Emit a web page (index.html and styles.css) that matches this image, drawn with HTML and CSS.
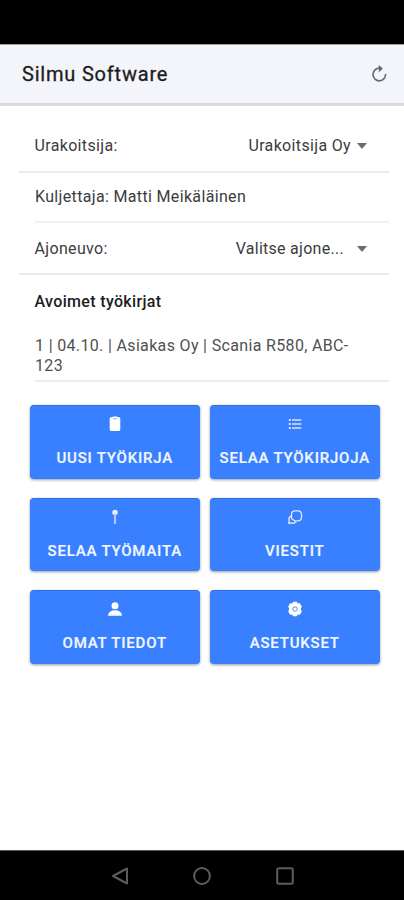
FILE: index.html
```html
<!DOCTYPE html>
<html lang="fi">
<head>
<meta charset="utf-8">
<title>Silmu Software</title>
<link rel="stylesheet" href="styles.css">
</head>
<body>
<div class="status"></div>
<header class="header">
  <h1 class="title">Silmu Software</h1>
  <svg class="refresh" viewBox="0 0 18 20" width="18" height="20"><path d="M8.800 4.200A6.300 6.300 0 1 0 15.600 10.500" fill="none" stroke="#6b6c70" stroke-width="1.700" stroke-linecap="round"/><path d="M8.700 1l4.200 3.500-4 3.700z" fill="#66676b"/></svg>
</header>
<main class="content">
  <div class="row"><span>Urakoitsija:</span><span class="value">Urakoitsija Oy</span><i class="caret"></i></div>
  <div class="row row-inset"><span>Kuljettaja: Matti Meikäläinen</span></div>
  <div class="row row-vehicle"><span>Ajoneuvo:</span><span class="value pick">Valitse ajone...</span><i class="caret"></i></div>
  <h2 class="subhead">Avoimet työkirjat</h2>
  <div class="job">1 | 04.10. | Asiakas Oy | Scania R580, ABC-<br>123</div>
  <div class="grid">
    <button class="btn"><svg class="icon" viewBox="0 0 16 16"><path d="M4 1.300h1.200Q5.700.500 6.500.500h3q.8 0 1.300.8H12q1.300 0 1.300 1.300v11q0 1.300-1.300 1.300H4q-1.300 0-1.300-1.300v-11Q2.700 1.300 4 1.300z" fill="#fff"/><path d="M6 2.800h4" stroke="#8ab4ff" stroke-width="1"/></svg><span>UUSI TYÖKIRJA</span></button>
    <button class="btn"><svg class="icon" viewBox="0 0 16 16"><path d="M5 4h9.300M5 8h9.300M5 12h9.300" stroke="#d6e4ff" stroke-width="1.400"/><path d="M1.800 4h2M1.800 8h2M1.800 12h2" stroke="#d6e4ff" stroke-width="2"/></svg><span>SELAA TYÖKIRJOJA</span></button>
    <button class="btn"><svg class="icon" viewBox="0 0 16 16"><circle cx="8" cy="3.500" r="2.700" fill="#eef4ff"/><path d="M8 5v10" stroke="#a9c8ff" stroke-width="2.200"/></svg><span>SELAA TYÖMAITA</span></button>
    <button class="btn"><svg class="icon" viewBox="0 0 16 16"><path d="M4.500 9.500V5.500Q4.500 1.800 8.300 1.800h2.400Q14.500 1.800 14.500 5.500v2.700Q14.500 11.800 10.800 11.800H7.500M3.500 7.200Q1.300 9 2.200 11.500l-.5 2.800 2.700-.3q2.500.8 4.400-.7M4.500 9.500l3 2.300" fill="none" stroke="#dfeaff" stroke-width="1.300" stroke-linejoin="round" stroke-linecap="round"/></svg><span>VIESTIT</span></button>
    <button class="btn"><svg class="icon" viewBox="0 0 16 16"><circle cx="8" cy="4.700" r="3.500" fill="#fff"/><path d="M1 14.800Q1.500 9.300 8 9.300t7 5.500z" fill="#fff"/></svg><span>OMAT TIEDOT</span></button>
    <button class="btn"><svg class="icon" viewBox="0 0 16 16"><path d="M6.300 1.200h3.400l.7 1.700 2.300-.2 1.600 2.900L13.200 8l1.100 2.400-1.600 2.900-2.300-.2-.7 1.700H6.300l-.7-1.700-2.300.2-1.600-2.900L2.800 8 1.700 5.600l1.600-2.900 2.300.2z" fill="#fff" stroke="#fff" stroke-width="1" stroke-linejoin="round"/><circle cx="8" cy="8" r="2.200" fill="none" stroke="#7fabff" stroke-width="1.200"/></svg><span>ASETUKSET</span></button>
  </div>
</main>
<nav class="nav">
  <svg viewBox="0 0 18 20" width="18" height="20"><path d="M16 2.500v15L2 10z"/></svg>
  <svg viewBox="0 0 20 20" width="20" height="20"><circle cx="10" cy="10" r="7.900"/></svg>
  <svg viewBox="0 0 20 20" width="20" height="20"><rect x="2.200" y="2.200" width="15.600" height="15.600" rx="1.500"/></svg>
</nav>
</body>
</html>
```
FILE: styles.css
```css
* { box-sizing: border-box; }
body { margin: 0; width: 404px; height: 900px; display: flex; flex-direction: column; overflow: hidden; background: #fff; color: #3c3c3c; font: 400 16px/20px Roboto, sans-serif; letter-spacing: .34px; }
.status { height: 44px; background: #000; }
.header { height: 62px; display: flex; align-items: center; justify-content: space-between; padding: 0 16px 0 22px; background: #f4f5fa; border-top: 1px solid #a0a0a2; border-bottom: 3px solid #dadbdd; }
.title { margin: 0; font-size: 20px; line-height: 24px; font-weight: 400; letter-spacing: .8px; color: #1c1c1e; -webkit-text-stroke: .3px #1c1c1e; }
.refresh { display: block; }
.content { flex: 1; padding: 15px 15px 0 19px; }
.row { display: flex; align-items: center; height: 52px; padding: 0 22px 0 15.5px; border-bottom: 2px solid #ececec; white-space: nowrap; }
.row-inset { height: 50px; margin-left: 16px; padding-left: 0; border-color: #f1f1f1; }
.row-vehicle { height: 52px; padding-top: 1px; }
.value { margin-left: auto; margin-right: 1px; }
.pick { margin-right: 8px; letter-spacing: .28px; }
.caret { margin-left: 5px; border: 5px solid transparent; border-top: 6px solid #6c6c6c; border-bottom: 0; }
.subhead { margin: 17px 0 0 15.5px; font-size: 16px; line-height: 20px; font-weight: 500; color: #1d1d1d; }
.job { height: 46px; margin: 24px 0 0 16px; border-bottom: 2px solid #eee; color: #505050; white-space: nowrap; }
.grid { display: grid; grid-template-columns: 169.5px 169.5px; gap: 19px 10.5px; margin: 23px 0 0 11px; }
.btn { display: flex; flex-direction: column; align-items: center; height: 73.7px; padding: 10px 0 0; border: 0; border-top: 1px solid #2d70e5; border-radius: 4px; background: #3880ff; color: #f2f6ff; font: 500 15px/20px Roboto, sans-serif; letter-spacing: .8px; -webkit-text-stroke: .2px #f2f6ff; white-space: nowrap; box-shadow: 0 1px 3px rgba(0,0,0,.4); }
.icon { width: 16px; height: 16px; margin-bottom: 16px; }
.nav { height: 50px; display: flex; align-items: center; justify-content: space-between; padding: 0 109px 0 111px; background: #000; border-top: 1px solid #555; }
.nav svg { fill: none; stroke: #5c5c5c; stroke-width: 2; stroke-linejoin: round; }
```
